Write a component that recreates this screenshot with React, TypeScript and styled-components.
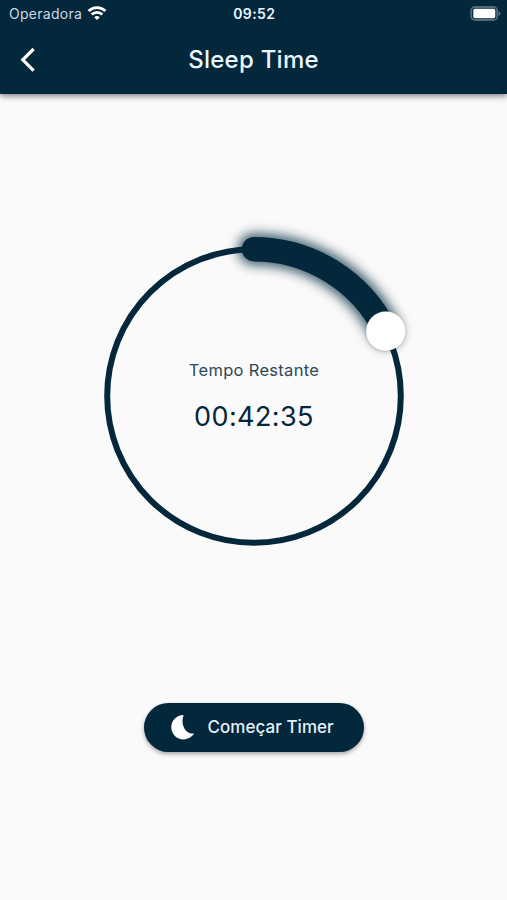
import React from "react";
import styled, { createGlobalStyle } from "styled-components";

const navy = "#03273b";

const GlobalStyle = createGlobalStyle`
  * { box-sizing: border-box; }
  body { margin: 0; background: #fafafa; }
`;

const Screen = styled.div`
  display: flex;
  flex-direction: column;
  align-items: center;
  width: 507px;
  height: 900px;
  overflow: hidden;
  background: #fafafa;
  color: ${navy};
  font-family: Inter, "Liberation Sans", sans-serif;
`;

const Header = styled.header`
  flex: none;
  width: 100%;
  height: 93.5px;
  background: ${navy};
  color: #e9f6ff;
  box-shadow: 0 2px 6px rgba(0, 0, 0, 0.5);
`;

const StatusBar = styled.div`
  display: grid;
  grid-template-columns: 1fr auto 1fr;
  align-items: center;
  height: 27px;
  padding: 0 6.5px 0 8px;
`;

const Carrier = styled.div`
  display: flex;
  align-items: center;
  gap: 4.5px;
  padding-left: 1px;
  color: #c9d9e3;
  font-size: 14px;
  letter-spacing: 0.28px;
`;

const Clock = styled.div`
  font-size: 14px;
  font-weight: 600;
  letter-spacing: 0.4px;
`;

const Battery = styled.svg`
  justify-self: end;
`;

const NavBar = styled.div`
  display: grid;
  grid-template-columns: 56px 1fr 56px;
  align-items: center;
  height: 66px;
`;

const BackButton = styled.button`
  display: flex;
  align-items: center;
  height: 48px;
  padding: 0 0 0 20px;
  border: 0;
  background: none;
`;

const Title = styled.h1`
  margin: 0;
  text-align: center;
  font-size: 24px;
  font-weight: 500;
  line-height: 32px;
  letter-spacing: 0.25px;
`;

const Dial = styled.div`
  display: grid;
  place-items: center;
  flex: none;
  width: 360px;
  height: 360px;
  margin: 122.3px 0 0 1px;

  > * { grid-area: 1 / 1; }
`;

const Remaining = styled.div`
  display: flex;
  flex-direction: column;
  align-items: center;
  gap: 17px;
  padding-top: 2px;
`;

const Caption = styled.div`
  color: #2c4859;
  font-size: 16.5px;
  line-height: 24px;
  letter-spacing: 0.3px;
`;

const Time = styled.div`
  font-size: 27px;
  line-height: 36px;
  letter-spacing: 0.4px;
`;

const StartButton = styled.button`
  display: flex;
  align-items: center;
  flex: none;
  gap: 12px;
  width: 220px;
  height: 49px;
  margin: 127px 0 0 1px;
  padding: 0 0 0 26.5px;
  border: 0;
  border-radius: 25px;
  background: ${navy};
  color: #e2f1fb;
  box-shadow: 0 2px 4px rgba(0, 0, 0, 0.35);
  font-family: inherit;
  font-size: 17px;
  font-weight: 500;
  letter-spacing: 0.05px;
  white-space: nowrap;
`;

const WifiIcon = () => (
  <svg width="20" height="15" viewBox="0 0 20 15" fill="none" stroke="#fff" strokeWidth="2.8">
    <path d="M1.6 5.1C6.2.5 13.8.5 18.4 5.1" />
    <path d="M4.7 8.6C7.6 5.7 12.4 5.7 15.3 8.6" />
    <path d="M10 14 7.2 11.2Q10 8.7 12.8 11.2Z" fill="#fff" stroke="none" />
  </svg>
);

const BatteryIcon = () => (
  <Battery width="31" height="15" viewBox="0 0 31 15">
    <rect x="1.2" y="1" width="26" height="13" rx="3.8" fill="none" stroke="#526b79" strokeWidth="1.8" />
    <rect x="3.3" y="2.8" width="22" height="9.4" rx="1.7" fill="#fff" />
    <path d="M28.4 5Q30.6 6 30.6 7.5T28.4 10Z" fill="#526b79" />
  </Battery>
);

const BackIcon = () => (
  <svg width="16" height="26" viewBox="0 0 16 26" fill="none" stroke="#fff" strokeWidth="3.2">
    <path d="M13.6 2 2.8 12.8 13.6 23.6" />
  </svg>
);

const MoonIcon = () => (
  <svg width="25" height="26" viewBox="0 0 25 26">
    <path d="M12.6.9C5.4 1.1.3 6.6.3 13.2C.3 20 5.8 25.4 12.6 25.4C17 25.4 21 23 23.1 19.6C18 19.8 14.6 17.2 12.8 13.2C11.1 9.4 11.1 5.2 12.6.9Z" fill="#fff" />
  </svg>
);

const RADIUS = 146.8;
const CENTER = 180;
const angle = (63.8 * Math.PI) / 180;
const knobX = CENTER + RADIUS * Math.sin(angle);
const knobY = CENTER - RADIUS * Math.cos(angle);
const arc = `M${CENTER} ${CENTER - RADIUS}A${RADIUS} ${RADIUS} 0 0 1 ${knobX} ${knobY}`;

const DialTrack = () => (
  <svg width="360" height="360" viewBox="0 0 360 360" fill="none">
    <defs>
      <filter id="glow" x="-40%" y="-60%" width="180%" height="220%">
        <feGaussianBlur stdDeviation="5.5" />
      </filter>
      <filter id="lift" x="-40%" y="-40%" width="180%" height="180%">
        <feDropShadow dx="0" dy="0.5" stdDeviation="1.8" floodColor="#000" floodOpacity="0.2" />
      </filter>
    </defs>
    <circle cx={CENTER} cy={CENTER} r={RADIUS} stroke={navy} strokeWidth="6" />
    <path d={arc} stroke={navy} strokeOpacity="0.7" strokeWidth="33" strokeLinecap="round" filter="url(#glow)" />
    <path d={arc} stroke={navy} strokeWidth="24.4" strokeLinecap="round" />
    <circle cx={knobX} cy={knobY} r="19.6" fill="#fff" filter="url(#lift)" />
  </svg>
);

export default function App() {
  return (
    <Screen>
      <GlobalStyle />
      <Header>
        <StatusBar>
          <Carrier>
            Operadora
            <WifiIcon />
          </Carrier>
          <Clock>09:52</Clock>
          <BatteryIcon />
        </StatusBar>
        <NavBar>
          <BackButton aria-label="Voltar">
            <BackIcon />
          </BackButton>
          <Title>Sleep Time</Title>
        </NavBar>
      </Header>
      <Dial>
        <DialTrack />
        <Remaining>
          <Caption>Tempo Restante</Caption>
          <Time>00:42:35</Time>
        </Remaining>
      </Dial>
      <StartButton>
        <MoonIcon />
        Começar Timer
      </StartButton>
    </Screen>
  );
}
